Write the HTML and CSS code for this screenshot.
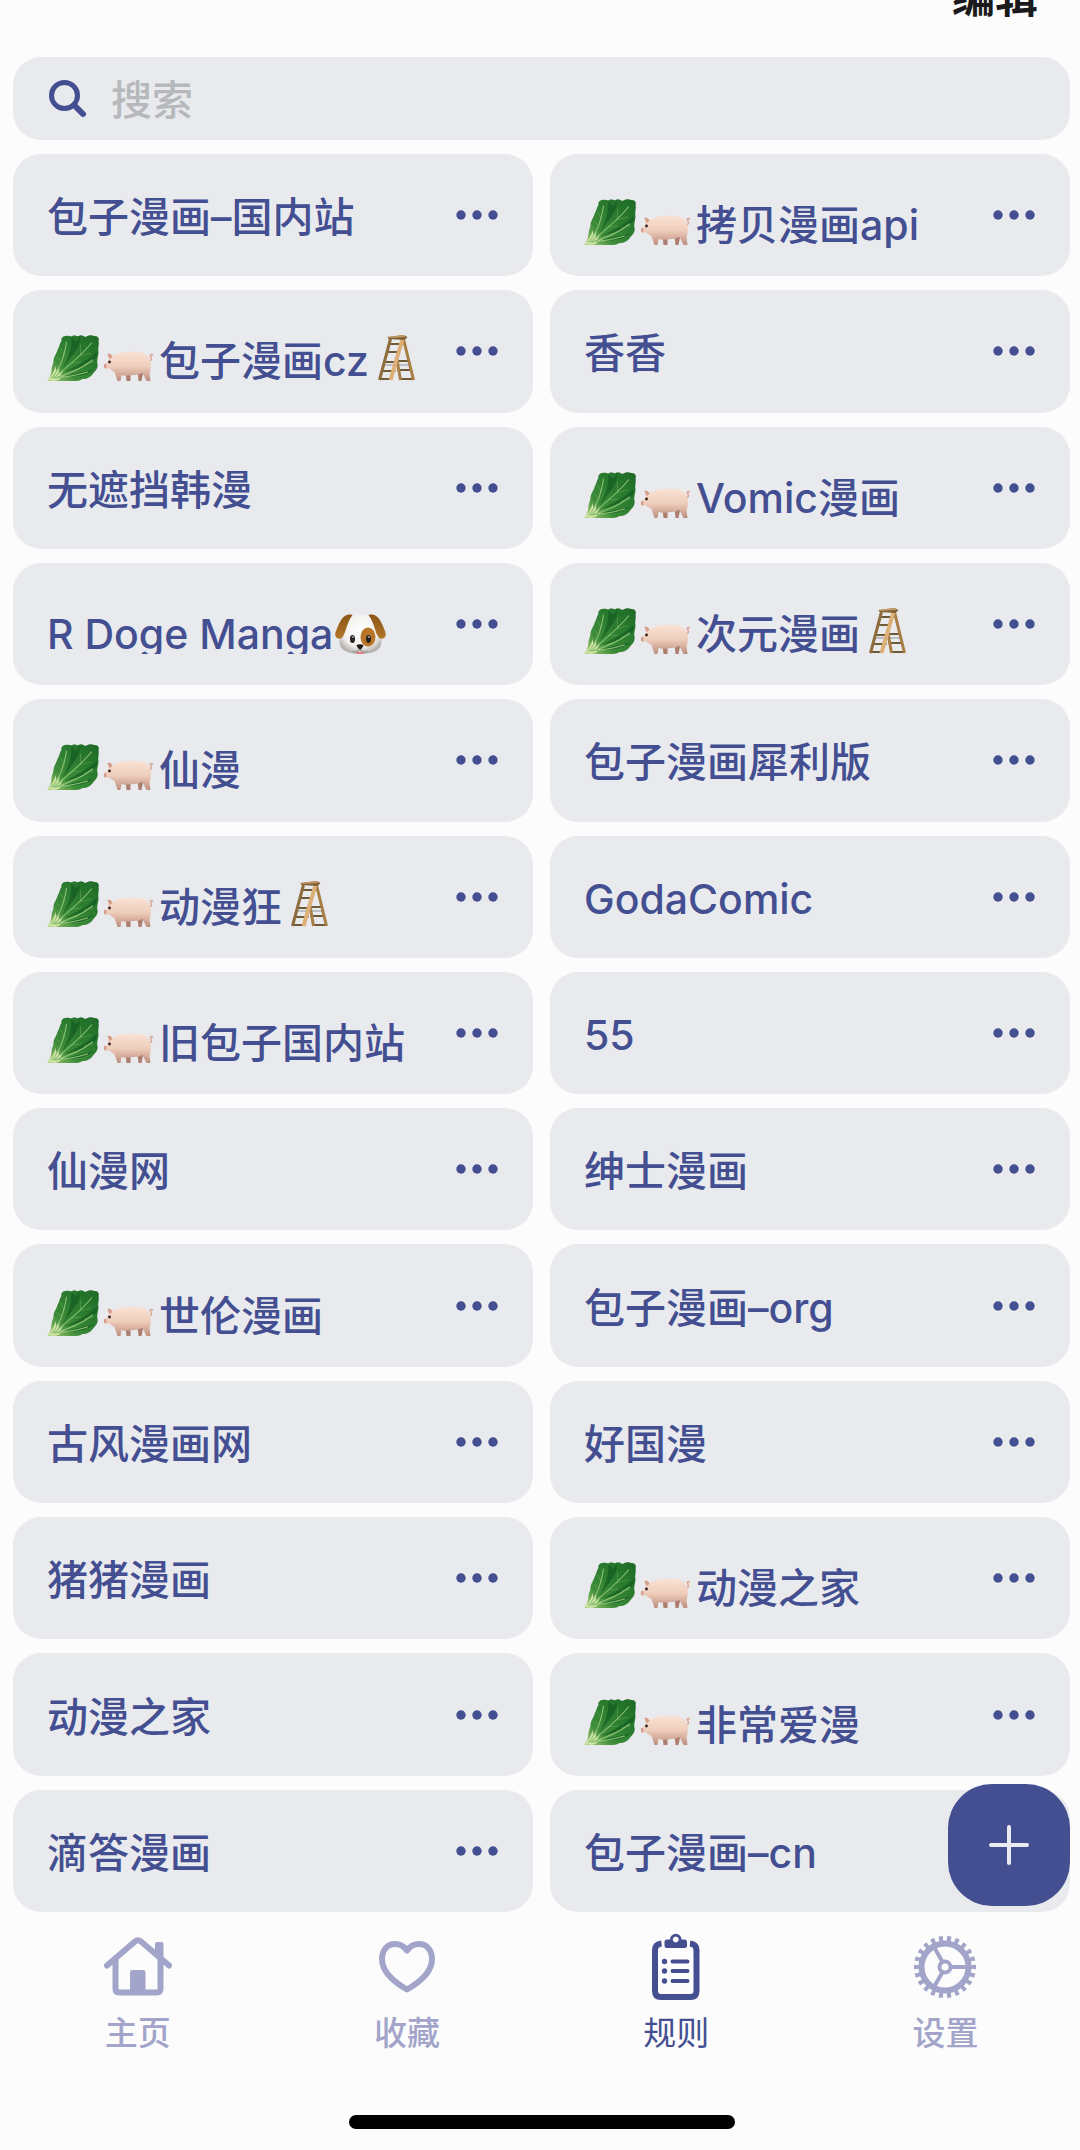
FILE: index.html
```html
<!DOCTYPE html>
<html lang="zh-CN">
<head>
<meta charset="utf-8">
<meta name="viewport" content="width=device-width, initial-scale=1">
<title>规则</title>
<link rel="stylesheet" href="styles.css">
</head>
<body>
<svg class="sprite" aria-hidden="true">
  <defs>
    <linearGradient id="leaf" x1="0" y1="1" x2="1" y2="0"><stop offset="0" stop-color="#a9cf74"/><stop offset=".3" stop-color="#3d8c3a"/><stop offset=".6" stop-color="#2b7c2f"/><stop offset="1" stop-color="#1d6a27"/></linearGradient>
    <linearGradient id="skin" x1="0" y1="0" x2="0" y2="1"><stop offset="0" stop-color="#f9e2d4"/><stop offset=".5" stop-color="#efcdbb"/><stop offset="1" stop-color="#bd8e7e"/></linearGradient>
    <radialGradient id="fur" cx=".5" cy=".4" r=".6"><stop offset="0" stop-color="#ffffff"/><stop offset=".7" stop-color="#f1f0ee"/><stop offset="1" stop-color="#b5b1ad"/></radialGradient>
    <linearGradient id="ear" x1="0" y1="0" x2="0" y2="1"><stop offset="0" stop-color="#8a5515"/><stop offset="1" stop-color="#b57629"/></linearGradient>
  </defs>
  <symbol id="cabbage" viewBox="0 0 55 46">
    <path fill="url(#leaf)" d="M0 45C3 41 4 38 4 34c0-3 2-5 2-8 0-4 3-7 4-11 2-3 2-7 4-9-1-2 1-5 4-5 3-1 5 1 7 0 2-2 4 1 6 0 3-2 5 0 7 1 3-2 6-2 9-1 4 0 5 3 4 5 1 4-1 7 0 11 0 4-2 8-1 12 1 4-2 7-4 9-3 4-6 6-11 6-3 2-6 2-9 2H1z"/>
    <path fill="#0f5520" opacity=".6" d="M24 2c2 3 4 4 5 5 2-2 2-4 3-6 1 8-2 12-6 18L15 34c6-12 9-19 9-32zM49 17C41 25 29 31 17 37c13-3 25-7 32-15zM46 34c-9 3-18 4-28 7 10 1 21 0 28-7z"/>
    <path fill="#d0e3a8" d="M0 45c4-5 7-8 8-14l1 5 3-4-1 7 5-4-4 7 7-3-8 6-4 1z"/>
    <g fill="none" stroke="#8dc274" stroke-linecap="round">
      <path stroke-width="1.100" d="M4 43C13 34 17 20 19 7M6 43C20 32 34 20 44 8M7 43c14-4 27-9 38-18M8 43c12-1 22-3 32-6"/>
      <path stroke-width=".5" opacity=".7" d="M17 20l-4-7M15 27l-5-4M33 20V10M32 21l11-3M24 28l9-1M37 29l9-2"/>
    </g>
  </symbol>
  <symbol id="pig" viewBox="0 0 55 46">
    <path fill="#ad7e6f" d="M34 36h6l-2 10h-3zM22 37h5v9h-4z"/>
    <path fill="none" stroke="#d9a793" stroke-width="1.500" stroke-linecap="round" d="M45 26c4 0 3-3 2-5-1-1 1-2 2-1"/>
    <path fill="url(#skin)" d="M5 24l-1-5c2-1 4 0 5 2 4-2 8-4 17-4 10-1 16 1 19 5 3 5 3 11 1 16l1 8h-4l-4-8c-3 1-5 2-9 2-5 1-10 1-12 0l-1 6h-3l-3-9c-3-1-4-3-6-4l-3 1c-2-1-2-4-1-5 2-1 3-1 4-5z"/>
    <path fill="#d49c8b" d="M4 19c2-1 4 0 5 3l-3 2z"/>
    <ellipse cx="1.700" cy="31" rx="1.300" ry="2.300" fill="#d79b8b"/>
    <circle cx="6" cy="27" r="1.400" fill="#332222"/>
  </symbol>
  <symbol id="ladder" viewBox="0 0 55 46">
    <g fill="none">
      <path stroke="#6f5a37" stroke-width="2" d="M18 17h11M15 27h12M28 26h12M12 36h14M28 35h14M20 9h14M10 44h12M30 44h14"/>
      <path stroke="#9ea3a8" stroke-width="1.200" d="M14 30h26"/>
      <path stroke="#a97e45" stroke-width="3" d="M34 4l10 41M27 22l4 23"/>
      <path stroke="#8f6c3c" stroke-width="3" d="M21 4L10 45"/>
      <path stroke="#dcb076" stroke-width="4" d="M33 4L21 45"/>
    </g>
    <path fill="#7d5f37" d="M18 2l16-2 4 2-3 3-16-1z"/>
    <path fill="#c39b63" d="M18 2l16-2 2 2-16 1z"/>
  </symbol>
  <symbol id="dog" viewBox="0 0 55 46">
    <path fill="url(#fur)" d="M27 6c9 0 13 5 15 14 2 5 6 8 6 14 0 8-8 12-21 12S6 42 6 34c0-6 4-9 6-14 2-9 6-14 15-14z"/>
    <path fill="url(#ear)" d="M19 7C11 5 8 11 5 17c-2 5-4 8-3 11s5 4 7 1c4-5 3-12 10-22zM35 7c8-2 11 4 14 10 2 5 4 8 3 11s-5 4-7 1c-4-5-3-12-10-22z"/>
    <ellipse cx="34.500" cy="29" rx="7.500" ry="9.500" fill="#b87527"/>
    <ellipse cx="19" cy="31" rx="2.500" ry="4" fill="#292322"/>
    <ellipse cx="35" cy="31" rx="2.500" ry="4" fill="#292322"/>
    <circle cx="19.500" cy="29" r=".8" fill="#fff"/><circle cx="35.500" cy="29" r=".8" fill="#fff"/>
    <path fill="#211817" d="M23 37c2-1 5-1 7 0 0 2-2 3-3 5h-1c-1-2-3-3-3-5z"/>
    <path fill="none" stroke="#817773" d="M19 43c3 2 5 1 7-2 3 3 5 4 8 2"/>
    <path fill="#e77d88" d="M23 44h7v2h-7z"/>
  </symbol>
  <symbol id="dots" viewBox="0 0 42 10"><circle cx="5" cy="5" r="4.700"/><circle cx="21" cy="5" r="4.700"/><circle cx="37" cy="5" r="4.700"/></symbol>
</svg>

<header class="topbar"><button class="edit" type="button">编辑</button></header>

<main class="content">
  <label class="search">
    <svg class="search-icon" viewBox="0 0 38 38" aria-hidden="true"><circle cx="15.500" cy="15.500" r="13"/><path d="M25 25l9 9" stroke-width="6"/></svg>
    <input class="search-input" type="search" placeholder="搜索" aria-label="搜索">
  </label>

  <div class="rules">
    <ul class="rule-grid">
      <li class="card"><span class="name">包子漫画–国内站</span><button class="more" type="button" aria-label="更多"><svg><use href="#dots"/></svg></button></li>
      <li class="card"><span class="name mixed"><svg class="emoji"><use href="#cabbage"/></svg><svg class="emoji"><use href="#pig"/></svg>拷贝漫画api</span><button class="more" type="button" aria-label="更多"><svg><use href="#dots"/></svg></button></li>
      <li class="card"><span class="name mixed"><svg class="emoji"><use href="#cabbage"/></svg><svg class="emoji"><use href="#pig"/></svg>包子漫画cz<svg class="emoji"><use href="#ladder"/></svg></span><button class="more" type="button" aria-label="更多"><svg><use href="#dots"/></svg></button></li>
      <li class="card"><span class="name">香香</span><button class="more" type="button" aria-label="更多"><svg><use href="#dots"/></svg></button></li>
      <li class="card"><span class="name">无遮挡韩漫</span><button class="more" type="button" aria-label="更多"><svg><use href="#dots"/></svg></button></li>
      <li class="card"><span class="name mixed"><svg class="emoji"><use href="#cabbage"/></svg><svg class="emoji"><use href="#pig"/></svg>Vomic漫画</span><button class="more" type="button" aria-label="更多"><svg><use href="#dots"/></svg></button></li>
      <li class="card"><span class="name mixed clipped">R Doge Manga<svg class="emoji"><use href="#dog"/></svg></span><button class="more" type="button" aria-label="更多"><svg><use href="#dots"/></svg></button></li>
      <li class="card"><span class="name mixed"><svg class="emoji"><use href="#cabbage"/></svg><svg class="emoji"><use href="#pig"/></svg>次元漫画<svg class="emoji"><use href="#ladder"/></svg></span><button class="more" type="button" aria-label="更多"><svg><use href="#dots"/></svg></button></li>
      <li class="card"><span class="name mixed"><svg class="emoji"><use href="#cabbage"/></svg><svg class="emoji"><use href="#pig"/></svg>仙漫</span><button class="more" type="button" aria-label="更多"><svg><use href="#dots"/></svg></button></li>
      <li class="card"><span class="name">包子漫画犀利版</span><button class="more" type="button" aria-label="更多"><svg><use href="#dots"/></svg></button></li>
      <li class="card"><span class="name mixed"><svg class="emoji"><use href="#cabbage"/></svg><svg class="emoji"><use href="#pig"/></svg>动漫狂<svg class="emoji"><use href="#ladder"/></svg></span><button class="more" type="button" aria-label="更多"><svg><use href="#dots"/></svg></button></li>
      <li class="card"><span class="name">GodaComic</span><button class="more" type="button" aria-label="更多"><svg><use href="#dots"/></svg></button></li>
      <li class="card"><span class="name mixed"><svg class="emoji"><use href="#cabbage"/></svg><svg class="emoji"><use href="#pig"/></svg>旧包子国内站</span><button class="more" type="button" aria-label="更多"><svg><use href="#dots"/></svg></button></li>
      <li class="card"><span class="name">55</span><button class="more" type="button" aria-label="更多"><svg><use href="#dots"/></svg></button></li>
      <li class="card"><span class="name">仙漫网</span><button class="more" type="button" aria-label="更多"><svg><use href="#dots"/></svg></button></li>
      <li class="card"><span class="name">绅士漫画</span><button class="more" type="button" aria-label="更多"><svg><use href="#dots"/></svg></button></li>
      <li class="card"><span class="name mixed"><svg class="emoji"><use href="#cabbage"/></svg><svg class="emoji"><use href="#pig"/></svg>世伦漫画</span><button class="more" type="button" aria-label="更多"><svg><use href="#dots"/></svg></button></li>
      <li class="card"><span class="name">包子漫画–org</span><button class="more" type="button" aria-label="更多"><svg><use href="#dots"/></svg></button></li>
      <li class="card"><span class="name">古风漫画网</span><button class="more" type="button" aria-label="更多"><svg><use href="#dots"/></svg></button></li>
      <li class="card"><span class="name">好国漫</span><button class="more" type="button" aria-label="更多"><svg><use href="#dots"/></svg></button></li>
      <li class="card"><span class="name">猪猪漫画</span><button class="more" type="button" aria-label="更多"><svg><use href="#dots"/></svg></button></li>
      <li class="card"><span class="name mixed"><svg class="emoji"><use href="#cabbage"/></svg><svg class="emoji"><use href="#pig"/></svg>动漫之家</span><button class="more" type="button" aria-label="更多"><svg><use href="#dots"/></svg></button></li>
      <li class="card"><span class="name">动漫之家</span><button class="more" type="button" aria-label="更多"><svg><use href="#dots"/></svg></button></li>
      <li class="card"><span class="name mixed"><svg class="emoji"><use href="#cabbage"/></svg><svg class="emoji"><use href="#pig"/></svg>非常爱漫</span><button class="more" type="button" aria-label="更多"><svg><use href="#dots"/></svg></button></li>
      <li class="card"><span class="name">滴答漫画</span><button class="more" type="button" aria-label="更多"><svg><use href="#dots"/></svg></button></li>
      <li class="card"><span class="name">包子漫画–cn</span></li>
    </ul>
    <button class="add" type="button" aria-label="添加"><svg viewBox="0 0 40 40" aria-hidden="true"><path d="M20 2v36M2 20h36"/></svg></button>
  </div>
</main>

<nav class="tabs">
  <a class="tab" href="#home">
    <span class="tab-icon"><svg width="68" height="60" viewBox="0 0 68 60" aria-hidden="true">
      <path class="line" d="M3 28.500L31 4.500q3-2.500 6 0L65 28.500M11.500 23v28.500q0 4 4 4h37q4 0 4-4V23"/>
      <path class="fill" d="M26 57V35q0-2 2-2h11.500q2 0 2 2v22zM51 18V7q0-2 2-2h4.500q2 0 2 2v18z"/>
    </svg></span>
    <span class="tab-label">主页</span>
  </a>
  <a class="tab" href="#favorites">
    <span class="tab-icon"><svg width="56" height="52" viewBox="0 0 56 52" aria-hidden="true">
      <path class="line" d="M28 9.500C25 5 21 3 16 3 8 3 3 9.500 3 18c0 12 11 22.500 25 30.500C42 40.500 53 30 53 18 53 9.500 48 3 40 3c-5 0-9 2-12 6.500z"/>
    </svg></span>
    <span class="tab-label">收藏</span>
  </a>
  <a class="tab active" href="#rules" aria-current="page">
    <span class="tab-icon"><svg width="48" height="68" viewBox="0 0 48 68" aria-hidden="true">
      <path class="line butt" d="M9.500 10.500C5 11 3 13 3 17v41q0 6 6 6h29.500q6 0 6-6V17c0-4-2-6-6.500-6.500"/>
      <path class="fill" fill-rule="evenodd" d="M15 6.500H18a5.750 5.750 0 0 1 11.500 0H32.500q2.500 0 2.500 2.500v3.500q0 2.500-2.500 2.500H15q-2.500 0-2.500-2.500V9q0-2.500 2.500-2.500zM23.700 3.500a3 3 0 1 0 .1 0z"/>
      <path class="line thin" d="M20.500 28.500H35.500M20.500 38H35.500M20.500 48H35.500"/>
      <g class="fill"><circle cx="12.500" cy="28.500" r="2.700"/><circle cx="12.500" cy="38" r="2.700"/><circle cx="12.500" cy="48" r="2.700"/></g>
    </svg></span>
    <span class="tab-label">规则</span>
  </a>
  <a class="tab" href="#settings">
    <span class="tab-icon"><svg width="62" height="62" viewBox="0 0 62 62" aria-hidden="true">
      <circle class="line" cx="31" cy="31" r="23.500"/>
      <circle class="line butt" cx="31" cy="31" r="28" pathLength="22" stroke-dasharray=".5 .5" stroke-dashoffset=".25"/>
      <circle class="line thin" cx="31" cy="31" r="5.500"/>
      <path class="line thin" d="M38 31h15M28 25l-8-14M28 37l-8 14"/>
    </svg></span>
    <span class="tab-label">设置</span>
  </a>
</nav>
<footer class="home-indicator"><span></span></footer>
</body>
</html>
```
FILE: styles.css
```css
* { box-sizing: border-box; }

:root {
  --ink: #434f91;
  --muted: #a2a5c9;
  --surface: #e9eaee;
  --page: #fcfcfc;
}

body {
  margin: 0;
  min-height: 100vh;
  display: flex;
  flex-direction: column;
  overflow-x: hidden;
  background: var(--page);
  color: var(--ink);
  font-family: Inter, "Noto Sans CJK SC", sans-serif;
  font-weight: 500;
}

button {
  border: 0;
  padding: 0;
  background: none;
  color: inherit;
  font: inherit;
}

.sprite { position: absolute; width: 0; height: 0; }

/* The top bar is partly scrolled out of view. */
.topbar {
  display: flex;
  justify-content: flex-end;
  height: 90px;
  margin-top: -33px;
  padding-right: 42px;
}

.edit {
  height: 60px;
  color: #1a1a1c;
  font-size: 43px;
  font-weight: 700;
  line-height: 60px;
}

.content {
  flex: 1;
  display: flex;
  flex-direction: column;
  gap: 14px;
  padding: 0 10px 0 13px;
}

.search {
  display: flex;
  align-items: center;
  gap: 24px;
  height: 83px;
  padding: 0 36px;
  border-radius: 28px;
  background: var(--surface);
}

.search-icon {
  width: 38px;
  height: 38px;
  fill: none;
  stroke: var(--ink);
  stroke-width: 5;
  stroke-linecap: round;
}

.search-input {
  flex: 1;
  min-width: 0;
  height: 60px;
  border: 0;
  padding: 2px 0 0;
  outline: 0;
  background: none;
  color: var(--ink);
  font: inherit;
  font-size: 41px;
  appearance: none;
}

.search-input::placeholder { color: #b6b8bb; opacity: 1; }

.rules {
  position: relative;
  flex: 1;
  display: flex;
}

.rule-grid {
  flex: 1;
  display: grid;
  grid-template-columns: repeat(2, minmax(0, 1fr));
  grid-auto-rows: minmax(120px, 1fr);
  gap: 14px 17px;
  margin: 0;
  padding: 0;
  list-style: none;
}

.card {
  display: flex;
  align-items: center;
  justify-content: space-between;
  padding: 0 35px 0 34px;
  border-radius: 28px;
  background: var(--surface);
}

.name {
  display: flex;
  height: 60px;
  padding-top: 2px;
  font-size: 41px;
  line-height: 60px;
  white-space: pre;
}

.mixed {
  padding-top: 20px;
  line-height: 40px;
}

.clipped { overflow: hidden; }

.emoji {
  flex: none;
  width: 56px;
  height: 46px;
  margin-top: -6px;
}

.more { display: flex; padding: 20px 0; }

.more svg { width: 42px; height: 10px; fill: var(--ink); }

.add {
  position: absolute;
  right: 0;
  bottom: 6px;
  display: grid;
  place-items: center;
  width: 122px;
  height: 122px;
  border-radius: 44px;
  background: var(--ink);
}

.add svg {
  width: 40px;
  height: 40px;
  fill: none;
  stroke: #eaebf2;
  stroke-width: 4;
  stroke-linecap: round;
}

.tabs {
  display: grid;
  grid-template-columns: repeat(4, 1fr);
  padding: 19px 0 0 3px;
}

.tab {
  display: flex;
  flex-direction: column;
  align-items: center;
  color: var(--muted);
  text-decoration: none;
}

.tab-icon {
  display: flex;
  align-items: center;
  height: 72px;
}

.tab-label {
  font-size: 33px;
  line-height: 60px;
}

.active { color: var(--ink); font-weight: 400; }

.line {
  fill: none;
  stroke: currentColor;
  stroke-width: 6;
  stroke-linecap: round;
  stroke-linejoin: round;
}

.butt { stroke-linecap: butt; }
.thin { stroke-width: 4; }
.fill { fill: currentColor; }

.home-indicator {
  display: flex;
  justify-content: center;
  padding: 52px 0 21px 3px;
}

.home-indicator span {
  width: 386px;
  height: 14px;
  border-radius: 7px;
  background: #000;
}
```
